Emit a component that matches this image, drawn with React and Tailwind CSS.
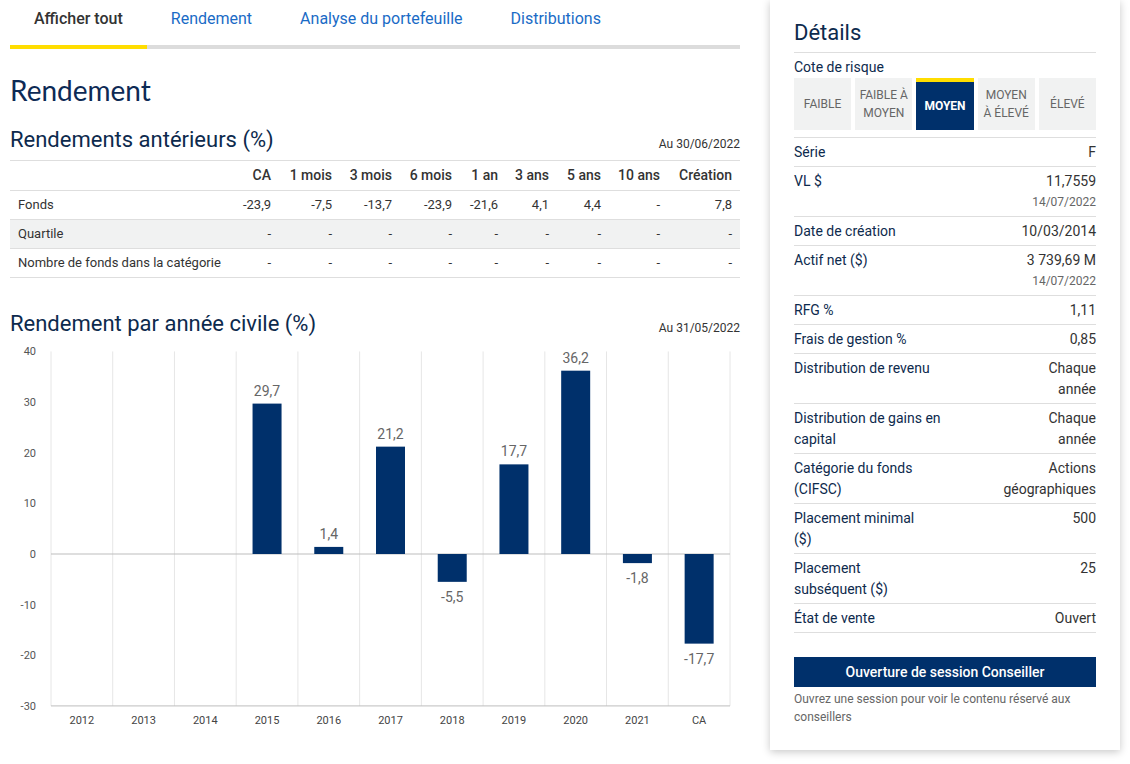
import React from "react";

const tabs = ["Afficher tout", "Rendement", "Analyse du portefeuille", "Distributions"];

const headers = ["CA", "1 mois", "3 mois", "6 mois", "1 an", "3 ans", "5 ans", "10 ans", "Création"];
const colWidths = [229, 40, 61, 60, 60, 46, 51, 52, 59, 72];

const rows = [
  { label: "Fonds", values: ["-23,9", "-7,5", "-13,7", "-23,9", "-21,6", "4,1", "4,4", "-", "7,8"] },
  { label: "Quartile", values: Array(9).fill("-"), shaded: true },
  { label: "Nombre de fonds dans la catégorie", values: Array(9).fill("-") },
];

const risks = [
  { label: ["FAIBLE"] },
  { label: ["FAIBLE À", "MOYEN"] },
  { label: ["MOYEN"], active: true },
  { label: ["MOYEN", "À ÉLEVÉ"] },
  { label: ["ÉLEVÉ"] },
];

const details = [
  { label: ["Série"], value: ["F"] },
  { label: ["VL $"], value: ["11,7559"], date: "14/07/2022" },
  { label: ["Date de création"], value: ["10/03/2014"] },
  { label: ["Actif net ($)"], value: ["3 739,69 M"], date: "14/07/2022" },
  { label: ["RFG %"], value: ["1,11"] },
  { label: ["Frais de gestion %"], value: ["0,85"] },
  { label: ["Distribution de revenu"], value: ["Chaque", "année"] },
  { label: ["Distribution de gains en", "capital"], value: ["Chaque", "année"] },
  { label: ["Catégorie du fonds", "(CIFSC)"], value: ["Actions", "géographiques"] },
  { label: ["Placement minimal", "($)"], value: ["500"] },
  { label: ["Placement", "subséquent ($)"], value: ["25"] },
  { label: ["État de vente"], value: ["Ouvert"] },
];

const years = [
  { x: "2012", v: null },
  { x: "2013", v: null },
  { x: "2014", v: null },
  { x: "2015", v: 29.7 },
  { x: "2016", v: 1.4 },
  { x: "2017", v: 21.2 },
  { x: "2018", v: -5.5 },
  { x: "2019", v: 17.7 },
  { x: "2020", v: 36.2 },
  { x: "2021", v: -1.8 },
  { x: "CA", v: -17.7 },
];

const fmt = (v) => v.toFixed(1).replace(".", ",");

const BarChart = () => {
  const left = 41;
  const right = 720;
  const colW = (right - left) / years.length;
  const y = (v) => 216 - v * 5.064;
  const ticks = [40, 30, 20, 10, 0, -10, -20, -30];

  return (
    <svg width="730" height="392" className="block">
      {ticks.map((t) => (
        <text key={t} x="26" y={y(t) + 4} textAnchor="end" fontSize="11" fill="#555" fontFamily="Roboto, sans-serif">
          {t}
        </text>
      ))}
      {Array.from({ length: years.length + 1 }).map((_, i) => (
        <line key={i} x1={left + i * colW} x2={left + i * colW} y1={y(40)} y2={y(-30)} stroke="#e6e6e6" strokeWidth="1" />
      ))}
      <line x1={left} x2={right} y1={y(0)} y2={y(0)} stroke="#bdbdbd" strokeWidth="1" />
      <line x1={left} x2={right} y1={y(-30)} y2={y(-30)} stroke="#bdbdbd" strokeWidth="1" />
      {years.map((d, i) => {
        const cx = left + colW * (i + 0.5);
        return (
          <g key={d.x}>
            {d.v !== null && (
              <>
                <rect
                  x={cx - 14.5}
                  y={d.v >= 0 ? y(d.v) : y(0)}
                  width="29"
                  height={Math.abs(d.v) * 5.064}
                  fill="#00306b"
                />
                <text
                  x={cx}
                  y={d.v >= 0 ? y(d.v) - 8 : y(d.v) + 20}
                  textAnchor="middle"
                  fontSize="14"
                  fill="#666"
                  fontFamily="Roboto, sans-serif"
                >
                  {fmt(d.v)}
                </text>
              </>
            )}
            <text x={cx} y="386" textAnchor="middle" fontSize="11" fill="#444" fontFamily="Roboto, sans-serif">
              {d.x}
            </text>
          </g>
        );
      })}
    </svg>
  );
};

export default function App() {
  return (
    <div className="w-[1130px] h-[764px] overflow-hidden bg-white flex font-['Roboto',sans-serif] text-[#333]">
      <div className="ml-[10px] w-[730px] shrink-0">
        {/* tabs */}
        <div className="flex border-b-4 border-[#dcdcdc]">
          {tabs.map((t, i) => (
            <div
              key={t}
              className={
                i === 0
                  ? "px-6 pt-2 pb-[15px] -mb-1 border-b-4 border-[#ffdd00] text-[16px] leading-[22px] font-medium text-[#333]"
                  : "px-6 pt-2 pb-[15px] text-[16px] leading-[22px] text-[#1a6bc6]"
              }
            >
              {t}
            </div>
          ))}
        </div>

        <h1 className="mt-[23px] text-[28px] leading-[36px] font-['Lato',sans-serif] text-[#0d2a55]">Rendement</h1>

        <div className="mt-[18px] flex items-end justify-between mb-[6px]">
          <h2 className="text-[22px] leading-[28px] text-[#0d2a4d]">Rendements antérieurs (%)</h2>
          <span className="text-[12px] leading-[16px] text-[#333] pb-[2px]">Au 30/06/2022</span>
        </div>

        <table className="w-[730px] table-fixed border-collapse border-t border-[#dedede]">
          <colgroup>
            {colWidths.map((w, i) => (
              <col key={i} style={{ width: w }} />
            ))}
          </colgroup>
          <thead>
            <tr className="border-b border-[#dedede] h-[30px]">
              <th></th>
              {headers.map((h) => (
                <th key={h} className="text-right pr-2 text-[14px] font-medium text-[#333]">
                  {h}
                </th>
              ))}
            </tr>
          </thead>
          <tbody>
            {rows.map((r) => (
              <tr key={r.label} className={`border-b border-[#dedede] h-[29px] ${r.shaded ? "bg-[#f1f2f2]" : ""}`}>
                <td className="pl-2 text-[13px] text-[#333]">{r.label}</td>
                {r.values.map((v, i) => (
                  <td key={i} className="text-right pr-2 text-[13px] text-[#333]">
                    {v}
                  </td>
                ))}
              </tr>
            ))}
          </tbody>
        </table>

        <div className="mt-[32px] flex items-end justify-between">
          <h2 className="text-[22px] leading-[28px] text-[#0d2a4d]">Rendement par année civile (%)</h2>
          <span className="text-[12px] leading-[16px] text-[#333] pb-[2px]">Au 31/05/2022</span>
        </div>

        <BarChart />
      </div>

      {/* details card */}
      <div className="ml-[30px] w-[350px] h-[750px] shrink-0 bg-white shadow-[0_2px_8px_rgba(0,0,0,0.22)] px-6 pt-[19px]">
        <h2 className="text-[22px] leading-[28px] text-[#0d2a4d] pb-[5px] border-b border-[#dedede]">Détails</h2>
        <div className="mt-[4px] text-[14px] leading-[20px] text-[#0d2a4d]">Cote de risque</div>
        <div className="mt-px grid grid-cols-5 gap-1">
          {risks.map((r) => (
            <div
              key={r.label.join(" ")}
              className={
                r.active
                  ? "h-[52px] bg-[#00306b] border-t-4 border-[#ffdd00] flex flex-col items-center justify-center text-[12px] leading-[18px] font-bold text-white"
                  : "h-[52px] bg-[#f1f2f2] flex flex-col items-center justify-center text-[12px] leading-[18px] text-[#666]"
              }
            >
              {r.label.map((l) => (
                <span key={l}>{l}</span>
              ))}
            </div>
          ))}
        </div>

        <div className="mt-[7px] border-t border-[#dedede]">
          {details.map((d) => (
            <div key={d.label.join(" ")} className="flex justify-between pt-1 pb-[3px] border-b border-[#dedede] text-[14px] leading-[21px]">
              <div className="text-[#0d2a4d]">
                {d.label.map((l) => (
                  <div key={l}>{l}</div>
                ))}
              </div>
              <div className="text-right text-[#333]">
                {d.value.map((v) => (
                  <div key={v}>{v}</div>
                ))}
                {d.date && <div className="text-[12px] text-[#666]">{d.date}</div>}
              </div>
            </div>
          ))}
        </div>

        <button className="mt-6 w-full h-[30px] bg-[#00306b] text-white text-[14px] font-medium">
          Ouverture de session Conseiller
        </button>
        <p className="mt-[3px] text-[12px] leading-[18px] text-[#666]">
          Ouvrez une session pour voir le contenu réservé aux conseillers
        </p>
      </div>
    </div>
  );
}
